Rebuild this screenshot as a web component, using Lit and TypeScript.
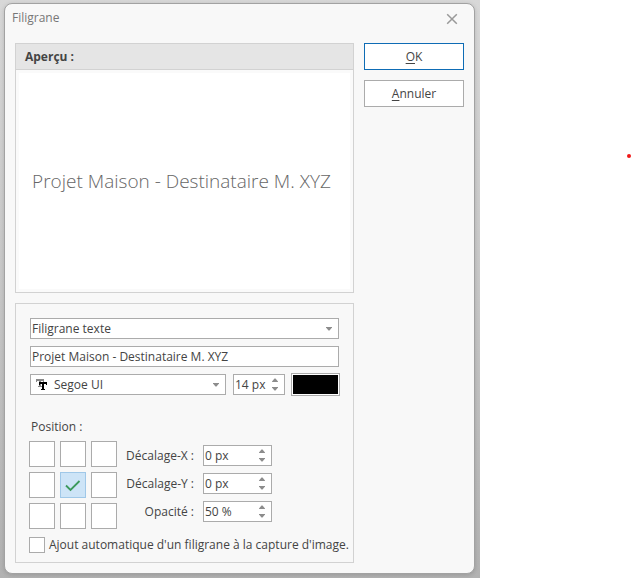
import { LitElement, html, css, svg } from "lit";
import { customElement, property, state } from "lit/decorators.js";

@customElement("spin-box")
class SpinBox extends LitElement {
  @property({ type: Number }) value = 0;
  @property() unit = "px";
  @property() label = "";

  static styles = css`
    :host {
      display: flex;
      box-sizing: border-box;
      height: 21px;
      background: #fff;
      border: 1px solid #ababab;
    }
    .value {
      flex: 1;
      min-width: 0;
      width: 0;
      padding: 0 0 0 1px;
      border: 0;
      outline: 0;
      background: none;
      font: inherit;
      color: inherit;
    }
    .steps {
      display: flex;
      flex-direction: column;
      width: 18px;
    }
    .step {
      flex: 1;
      display: flex;
      align-items: center;
      justify-content: center;
      padding: 0;
      border: 0;
      background: none;
    }
    .arrow {
      display: block;
      fill: #8c8c8c;
    }
  `;

  render() {
    return html`
      <input class="value" type="text" aria-label=${this.label} .value=${`${this.value} ${this.unit}`} />
      <span class="steps">
        <button class="step" aria-label="Augmenter" @click=${() => this.value++}>
          <svg class="arrow" width="6" height="4"><path d="M0 4 V3.5 L2.5 0.5 H3.5 L6 3.5 V4Z" /></svg>
        </button>
        <button class="step" aria-label="Diminuer" @click=${() => this.value--}>
          <svg class="arrow" width="6" height="4"><path d="M0 0 V0.5 L2.5 3.5 H3.5 L6 0.5 V0Z" /></svg>
        </button>
      </span>
    `;
  }
}

@customElement("app-root")
class AppRoot extends LitElement {
  @state() text = "Projet Maison - Destinataire M. XYZ";
  @state() position = 4;

  static styles = css`
    :host {
      display: grid;
      grid-template-columns: minmax(0, 1fr) 152px;
      min-height: 100vh;
      background: #fff;
      color: #444;
      font: 12px/16px "Open Sans", "Noto Sans", sans-serif;
    }
    * {
      box-sizing: border-box;
    }
    .backdrop {
      padding: 3px 5px 4px 4px;
      background: linear-gradient(#d8d8d8, #c8c8c8 50%, #b2b2b2);
    }
    .dialog {
      background: #f8f8f8;
      border: 1px solid #a2a2a2;
      border-radius: 8px;
      box-shadow: 0 1px 4px rgba(0, 0, 0, 0.15);
      padding: 0 10px 10px;
    }
    .titlebar {
      display: flex;
      align-items: center;
      justify-content: space-between;
      height: 27px;
      margin: 0 -4px 12px -3px;
      color: #777;
    }
    .title {
      margin: 0;
      font: inherit;
    }
    .close {
      display: flex;
      padding: 2px 10px 0;
      border: 0;
      background: none;
    }
    .columns {
      display: grid;
      grid-template-columns: minmax(0, 1fr) 100px;
      gap: 10px;
    }
    .stack {
      display: flex;
      flex-direction: column;
      gap: 10px;
    }
    .button {
      height: 27px;
      padding: 0;
      border: 1px solid #ababab;
      background: #fff;
      color: inherit;
      font: inherit;
    }
    .primary {
      border-color: #0e6cb5;
    }
    .key {
      text-decoration: underline;
      text-underline-offset: 2px;
    }
    .panel {
      border: 1px solid #d2d2d2;
    }
    .heading {
      margin: 0;
      padding: 5px 9px 4px;
      border-bottom: 1px solid #d2d2d2;
      background: #e5e5e5;
      font: bold 12px/16px "Open Sans", "Noto Sans", sans-serif;
    }
    .preview {
      display: flex;
      align-items: center;
      justify-content: center;
      height: 222px;
      padding-right: 6px;
      border: 3px solid #fafafa;
      background: #fff;
      color: #666;
      font-size: 19px;
      font-weight: 300;
      white-space: nowrap;
    }
    .settings {
      padding: 14px 14px 9px;
    }
    .fields {
      display: flex;
      flex-direction: column;
      gap: 7px;
    }
    .picker {
      position: relative;
      display: flex;
      flex: 1;
      min-width: 0;
    }
    .box {
      width: 100%;
      height: 21px;
      margin: 0;
      padding: 0 1px;
      border: 1px solid #ababab;
      border-radius: 0;
      outline: 0;
      appearance: none;
      background: #fff;
      color: inherit;
      font: inherit;
    }
    .with-icon {
      padding-left: 23px;
    }
    .caret,
    .type-icon {
      position: absolute;
      pointer-events: none;
    }
    .caret {
      right: 7px;
      top: 9px;
      fill: #8c8c8c;
    }
    .type-icon {
      left: 6px;
      top: 5px;
    }
    .row {
      display: flex;
      align-items: center;
      height: 21px;
    }
    .size {
      width: 52px;
      margin: 0 6px 0 7px;
    }
    .swatch {
      width: 49px;
      height: 23px;
      margin: 0 -1px 0 0;
      padding: 1px;
      border: 1px solid #ababab;
      appearance: none;
      background: #fff;
    }
    .swatch::-webkit-color-swatch-wrapper {
      padding: 0;
    }
    .swatch::-webkit-color-swatch {
      border: 0;
      border-radius: 0;
    }
    .placement {
      display: flex;
      flex-wrap: wrap;
      margin-left: -1px;
      padding-top: 24px;
    }
    .caption {
      width: 100%;
      margin-bottom: 6px;
      padding-left: 2px;
    }
    .grid {
      display: grid;
      grid-template-columns: repeat(3, 26px);
      gap: 5px;
      margin-right: 9px;
    }
    .cell,
    .check {
      flex: none;
      margin: 0;
      border: 1px solid #ababab;
      appearance: none;
      background: #fff;
    }
    .cell {
      width: 26px;
      height: 26px;
    }
    .cell:checked {
      border-color: #a0c8e8;
      background: #cde4f7;
    }
    .slot {
      position: relative;
      display: flex;
    }
    .tick {
      position: absolute;
      left: 5px;
      top: 7px;
      pointer-events: none;
    }
    .offsets {
      display: grid;
      grid-template-columns: 68px 69px;
      grid-auto-rows: 21px;
      align-items: center;
      gap: 7px 9px;
      padding-top: 4px;
    }
    .name {
      text-align: right;
      white-space: nowrap;
    }
    .auto {
      display: flex;
      align-items: center;
      gap: 4px;
      margin: 8px 0 0 -1px;
      white-space: nowrap;
    }
    .check {
      width: 16px;
      height: 16px;
    }
    .check:checked {
      background: #cde4f7;
    }
    .canvas {
      display: flex;
      justify-content: flex-end;
      padding: 154px 1px 0 0;
    }
    .dot {
      width: 4px;
      height: 4px;
      border-radius: 2px;
      background: #f01818;
    }
  `;

  caret() {
    return html`<svg class="caret" width="6" height="4"><path d="M0 0 V0.5 L2.5 3.5 H3.5 L6 0.5 V0Z" /></svg>`;
  }

  offset(name: string, value: number, unit: string) {
    return html`<span class="name">${name} :</span
      ><spin-box .label=${name} .value=${value} .unit=${unit}></spin-box>`;
  }

  render() {
    const glyph = svg`<path d="M0 0 H8 V3 H7 V2 H5 V7 H6 V8 H2 V7 H3 V2 H1 V3 H0Z" />`;
    return html`
      <div class="backdrop">
        <main class="dialog" role="dialog" aria-labelledby="title">
          <header class="titlebar">
            <h1 class="title" id="title">Filigrane</h1>
            <button class="close" aria-label="Fermer">
              <svg width="12" height="12" fill="none" stroke="#999" stroke-width="1.5">
                <path d="M1.2 1.2 L10.8 10.8 M10.8 1.2 L1.2 10.8" />
              </svg>
            </button>
          </header>
          <div class="columns">
            <div class="stack">
              <section class="panel">
                <h2 class="heading">Aperçu :</h2>
                <div class="preview">${this.text}</div>
              </section>
              <section class="panel settings">
                <div class="fields">
                  <div class="picker">
                    <select class="box" aria-label="Type de filigrane">
                      <option>Filigrane texte</option>
                    </select>
                    ${this.caret()}
                  </div>
                  <input
                    class="box"
                    type="text"
                    aria-label="Texte du filigrane"
                    .value=${this.text}
                    @input=${(e: Event) => (this.text = (e.target as HTMLInputElement).value)}
                  />
                  <div class="row">
                    <div class="picker">
                      <select class="box with-icon" aria-label="Police">
                        <option>Segoe UI</option>
                      </select>
                      <svg class="type-icon" width="12" height="12" aria-hidden="true">
                        <g fill="#888">${glyph}</g>
                        <g fill="#000" transform="translate(3 3)">${glyph}</g>
                      </svg>
                      ${this.caret()}
                    </div>
                    <spin-box class="size" label="Taille" .value=${14}></spin-box>
                    <input class="swatch" type="color" value="#000000" aria-label="Couleur" />
                  </div>
                </div>
                <div class="placement">
                  <div class="caption" id="position">Position :</div>
                  <div class="grid" role="radiogroup" aria-labelledby="position">
                    ${Array.from(
                      { length: 9 },
                      (_, i) => html`<label class="slot">
                        <input
                          class="cell"
                          type="radio"
                          name="position"
                          aria-label=${`Position ${i + 1}`}
                          .checked=${i === this.position}
                          @change=${() => (this.position = i)}
                        />
                        ${i === this.position
                          ? html`<svg class="tick" width="16" height="13" fill="none" stroke="#3c9a5c" stroke-width="1.8">
                              <path d="M1 6.5 L5.5 11 L14.5 2" />
                            </svg>`
                          : ""}
                      </label>`
                    )}
                  </div>
                  <div class="offsets">
                    ${this.offset("Décalage-X", 0, "px")} ${this.offset("Décalage-Y", 0, "px")}
                    ${this.offset("Opacité", 50, "%")}
                  </div>
                </div>
                <label class="auto">
                  <input class="check" type="checkbox" />
                  Ajout automatique d'un filigrane à la capture d'image.
                </label>
              </section>
            </div>
            <div class="stack">
              <button class="button primary"><span class="key">O</span>K</button>
              <button class="button"><span class="key">A</span>nnuler</button>
            </div>
          </div>
        </main>
      </div>
      <div class="canvas"><span class="dot"></span></div>
    `;
  }
}
